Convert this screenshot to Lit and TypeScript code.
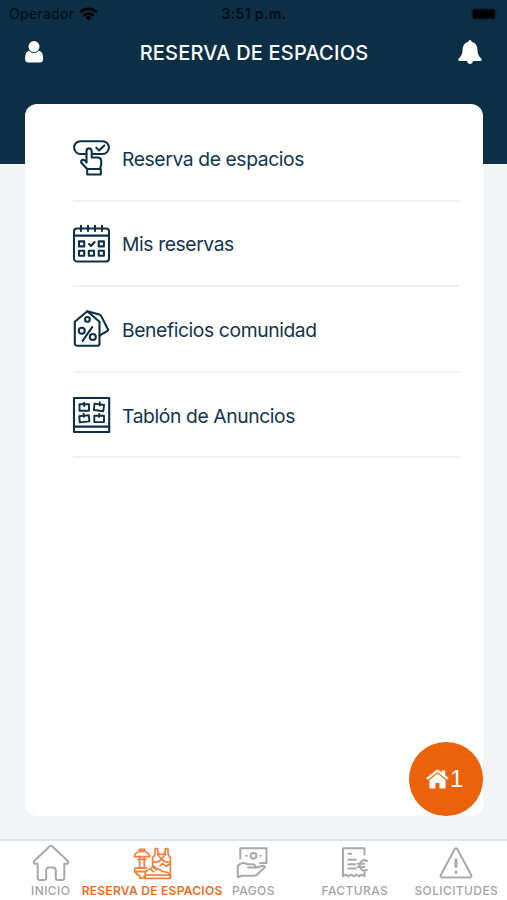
import { LitElement, html, svg, css, nothing } from "lit";
import { customElement, property } from "lit/decorators.js";
import { classMap } from "lit/directives/class-map.js";

const menuIcons: Record<string, unknown> = {
  touch: svg`
    <path d="M14.500 16H8.500a6.300 6.300 0 0 1 0-12.800h22a6.300 6.300 0 0 1 0 12.800H20.600"/>
    <path d="M24.300 9.800l2.800 2.600 5.200-5"/>
    <path d="M14.500 24.500V13a2.600 2.600 0 0 1 5.200 0v6.500h6.500q3 .3 3 3.300v4l-1.400 4.200H15.200l-5.800-6.200c-1-3 2-3.800 3.400-2.200l1.900 1.900M15.200 31h13.600v5.500H15.200z"/>`,
  calendar: svg`
    <rect x="2" y="4.500" width="35" height="33" rx="3"/>
    <path d="M2 11.600h35M9 1.700v5.200M16 1.700v5.200M23 1.700v5.200M30 1.700v5.200"/>
    <path d="M7 17.400h5.200v5H7zM26.700 17.400h5.200v5h-5.200zM7 26.800h5.200v5H7zM16.800 26.800H22v5h-5.200zM26.700 26.800h5.200v5h-5.200z"/>
    <path d="M17 20l2 2 3.600-4"/>`,
  tags: svg`
    <path d="M2.800 12.800L15.300 2.300l12.200 10.500v21.600a2.400 2.400 0 0 1-2.400 2.400H5.200a2.400 2.400 0 0 1-2.400-2.400z"/>
    <path d="M15.300 2.300l12 3.300q1.500.5 2.200 2L36 20.500q.3 1.100-.8 1.700l-7.700 4.300"/>
    <circle cx="15.400" cy="10.400" r="2.400"/><circle cx="9.800" cy="21.800" r="3"/>
    <circle cx="20.800" cy="28" r="3"/><path d="M20.200 18.200L10.600 31.800"/>`,
  board: svg`
    <rect x="2" y="3" width="35.200" height="34"/>
    <path d="M2 31.600h35.200"/>
    <path d="M7.500 9.300H17v6.400H7.500zM22.500 8.600l9.600 1.400-.8 6.200-9.400-1.200zM7.200 21.200l9.600-1 .6 6.200-9.600 1zM22.300 20.800H32v6.300h-9.700z" stroke-width="1.900"/>
    <path d="M12.200 7.600v3.400M27.800 7.200v3.400M11.600 18.800l.3 3M27.200 18.900v3" stroke-width="1.900"/>`,
};

const tabIcons: Record<string, unknown> = {
  home: svg`<path d="M19.800 2.200q1.200-.9 2.400 0l15.600 14.800q1.400 1.600-.3 2.700h-3.200v14.200q0 2-2 2h-4.500q-2 0-2-2v-7.600q0-2.800-2.800-2.800h-4q-2.800 0-2.800 2.800v7.600q0 2-2 2h-4.500q-2 0-2-2V19.700H4.500q-1.600-1-.3-2.700z"/>`,
  gym: svg`
    <path d="M8.300 7.500V5.300h5.400v2.200M3.300 12.600q.5-3.600 5-5.100h5.400q4.500 1.500 5 5.100zM8.700 12.600v11.600M13.300 12.600v11.600M7 15.300h8M7 24.200h8" stroke-width="1.800"/>
    <path d="M15 24.200H4.200q-1.300 1.300-.4 3.300 1.500 3 5 4.200v2.500h4.400v-2.500M3.500 27.500h12" stroke-width="1.800"/>
    <path d="M24 4.500v4.300q0 3.400-2.400 4.700v9.500M26.700 4.500v2q0 4 3.800 4t3.800-4v-2M37 4.500v4.300q0 3.400 2.400 4.700v20.800M24 4.500h2.700M34.300 4.500H37M26.500 10.500l4 4.500 4-4.500M21.600 17.500q5.200 2.200 9-2.500 3.600 4.700 8.800 2.500M29 22l2.500-2.500 3.500 2.700 4.400-2.700" stroke-width="1.700"/>
    <path d="M14.300 34.300h25v-3.100h-25zM14.300 31.200q-.8-3.500 1.500-4.700 4.200-1.300 6.700-4.500 2.300 2.800 5 3.200l4.500 2.300q4.500 0 7.300 3M20 25.800l2.700 2M22.800 23.800l2.900 2" stroke-width="1.700"/>`,
  pay: svg`
    <g transform="translate(2 0)"><path d="M6.300 14.500V4.300h26.200v14.800h-6.500"/>
    <circle cx="19.500" cy="11.800" r="2.900"/>
    <path d="M12.200 11.800h.6M26.400 11.800h.6M3.800 22v11.300M3.800 22q4-4.800 9.200-1.800h6q2.700.4 2.200 3.400h-7M21.200 23.800l8-2q2.300 0 1.200 2l-7.200 6.600q-1.500 1.400-3.500 1.400H7.500l-3.700 1.500"/></g>`,
  invoice: svg`
    <path d="M30.500 10.500V4.300H9v28l2.600-1.800 2.700 1.800 2.700-1.800 2.700 1.800 2.700-1.800 2.700 1.800 2.700-1.800 2.700 1.800v-5.500"/>
    <path d="M14.300 9.800h3M14.300 15.800h7.500M14.300 20.300h7M14.300 24.600h7.500"/>
    <path d="M33 17q-6-3-7.300 4.300 1.200 7.300 7.300 4.500M23.800 19.800h6.500M23.800 22.900h6.500"/>`,
  alert: svg`
    <path d="M19.800 5q1.200-1.600 2.400 0l14 26q.8 2.200-1.400 2.500H7.200q-2.200-.3-1.400-2.500z"/>
    <path d="M21 15.500v7M21 28v.3" stroke-width="3"/>`,
};

@customElement("menu-row")
class MenuRow extends LitElement {
  @property() icon = "";
  @property() label = "";

  static styles = css`
    :host { display: block; height: 85.600px; box-sizing: border-box; border-bottom: 2px solid #f0f1f2; }
    .row { display: flex; align-items: center; height: 84.500px; }
    svg { width: 40px; height: 40px; margin-left: -1px; flex: none; fill: none; stroke: #0d3047; stroke-width: 2.100; stroke-linecap: round; stroke-linejoin: round; }
    .label { margin: 1px 0 0 10px; font-size: 19.300px; letter-spacing: -0.390px; color: #14344a; white-space: nowrap; }
  `;

  render() {
    return html`<div class="row">
      <svg viewBox="0 0 40 40">${menuIcons[this.icon] ?? nothing}</svg>
      <span class="label">${this.label}</span>
    </div>`;
  }
}

@customElement("tab-item")
class TabItem extends LitElement {
  @property() icon = "";
  @property() label = "";
  @property({ type: Boolean }) active = false;

  static styles = css`
    :host { display: block; min-width: 0; }
    .tab { display: flex; flex-direction: column; align-items: center; color: #a9a9a9; }
    .tab.active { color: #f0823f; }
    svg { width: 42px; height: 38px; margin-top: 3px; flex: none; fill: none; stroke: currentColor; stroke-width: 2; stroke-linecap: round; stroke-linejoin: round; }
    .label { font-size: 12px; line-height: 16px; margin-top: 1px; font-weight: 500; letter-spacing: 0.400px; white-space: nowrap; color: #a3a3a3; }
    .active .label { color: #ee6c20; font-weight: 600; letter-spacing: 0.280px; }
  `;

  render() {
    return html`<div class=${classMap({ tab: true, active: this.active })}>
      <svg viewBox="0 0 42 38">${tabIcons[this.icon] ?? nothing}</svg>
      <span class="label">${this.label}</span>
    </div>`;
  }
}

@customElement("app-root")
class AppRoot extends LitElement {
  static styles = css`
    :host { display: flex; flex-direction: column; position: relative; width: 507px; height: 900px; overflow: hidden; font-family: Inter, "Liberation Sans", sans-serif; background: linear-gradient(#0d2f45 164px, #f2f4f6 164px); }
    .status { display: grid; grid-template-columns: 1fr auto 1fr; align-items: center; height: 27px; padding: 0 8px 0 9px; box-sizing: border-box; color: #020d16; font-size: 14px; flex: none; }
    .carrier { display: flex; align-items: center; gap: 5px; letter-spacing: 0.300px; }
    .time { font-weight: 600; letter-spacing: 0.350px; }
    .wifi { width: 19px; height: 14px; fill: none; stroke: #000; stroke-width: 3; }
    .battery { justify-self: end; width: 28px; height: 12px; }
    .bar { display: flex; justify-content: space-between; align-items: center; height: 50px; padding: 0 24px; flex: none; }
    .bar svg { fill: #fff; }
    .user { width: 20px; height: 24px; }
    .bell { width: 26px; height: 26px; }
    .title { margin: 1px 0 0 7px; font-size: 20px; font-weight: 500; color: #fff; letter-spacing: 0.200px; white-space: nowrap; }
    .card { margin: 27px 24.500px 23px 25px; padding: 12px 22.500px 0 48px; border-radius: 12px; background: #fff; flex: 1; min-height: 0; }
    .tabs { display: grid; grid-template-columns: repeat(5, 1fr); height: 61px; flex: none; box-sizing: border-box; border-top: 2px solid #e0e2e4; background: #fff; }
    .fab { position: absolute; right: 24.500px; bottom: 84.500px; width: 73.500px; height: 73.500px; border: 0; padding: 0; border-radius: 50%; background: #eb620b; color: #fff; display: flex; align-items: center; justify-content: center; gap: 1px; font: 24px "Liberation Sans", sans-serif; }
    .fab svg { width: 23px; height: 20px; fill: #fff; margin-left: -2px; }
  `;

  render() {
    return html`
      <div class="status">
        <div class="carrier"><span>Operador</span>
          <svg class="wifi" viewBox="0 0 19 14">
            <path d="M1.200 5.200a12 12 0 0 1 16.600 0M4.400 8.500a7.400 7.400 0 0 1 10.200 0" stroke-width="2.600"/>
            <path d="M9.500 13.500l-3-3a4.300 4.300 0 0 1 6 0z" fill="#000" stroke="none"/>
          </svg>
        </div>
        <span class="time">3:51 p.m.</span>
        <svg class="battery" viewBox="0 0 28 12"><rect x=".5" y=".5" width="24.500" height="11" rx="3" fill="none" stroke="#082538"/><rect x="1.500" y="1.500" width="22.500" height="9" rx="1.500"/><path d="M26.300 4.500q1.500 1.500 0 3z" fill="#082538"/></svg>
      </div>
      <div class="bar">
        <svg class="user" viewBox="0 0 20 24"><circle cx="10" cy="6.600" r="5.500"/><path d="M5.200 10.700a6.300 6.300 0 0 0 9.600 0q4.400.8 4.400 7.800 0 3.900-3.200 3.900H4.200Q1 22.400 1 18.500q0-7 4.200-7.800z"/></svg>
        <h1 class="title">RESERVA DE ESPACIOS</h1>
        <svg class="bell" viewBox="0 0 26 26"><path d="M13 1q1.500 0 1.600 1.800Q20 4 20.400 10.500q.3 7 4.300 9.500.5 2-1.200 2H16q-.6 3-3 3t-3-3H2.500q-1.700 0-1.200-2 4-2.500 4.300-9.500Q6 4 11.400 2.800 11.500 1 13 1z"/></svg>
      </div>
      <main class="card">
        <menu-row icon="touch" label="Reserva de espacios"></menu-row>
        <menu-row icon="calendar" label="Mis reservas"></menu-row>
        <menu-row icon="tags" label="Beneficios comunidad"></menu-row>
        <menu-row icon="board" label="Tablón de Anuncios"></menu-row>
      </main>
      <nav class="tabs">
        <tab-item icon="home" label="INICIO"></tab-item>
        <tab-item icon="gym" label="RESERVA DE ESPACIOS" active></tab-item>
        <tab-item icon="pay" label="PAGOS"></tab-item>
        <tab-item icon="invoice" label="FACTURAS"></tab-item>
        <tab-item icon="alert" label="SOLICITUDES"></tab-item>
      </nav>
      <button class="fab">
        <svg viewBox="0 0 22 20" preserveAspectRatio="none"><path d="M11 4.600l7.700 6.500v7.600q0 .8-.8.800h-5v-5.600H9.100v5.600h-5q-.8 0-.8-.8v-7.600z"/><path d="M11 .6q.8 0 1.500.6l2.600 2.200V1.400h3.300v4.900l3.300 2.800-1.300 1.600L11 3.300 1.600 10.700.3 9.100l9.200-7.900Q10.200.6 11 .6z"/></svg>
        <span>1</span>
      </button>
    `;
  }
}
